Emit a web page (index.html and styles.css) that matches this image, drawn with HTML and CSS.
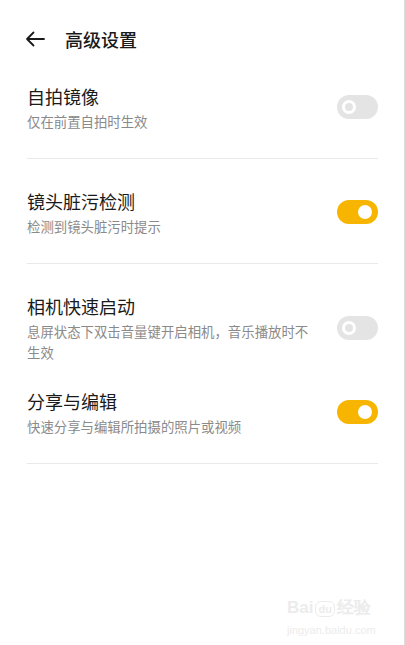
FILE: index.html
```html
<!DOCTYPE html>
<html>
<head>
	<title>高级设置</title>
	<meta charset="utf8"/>
	<link rel="stylesheet" href="styles.css">
</head>
<body>
	<div class="screen">
		<div class="header">
			<svg class="back" width="20" height="16" viewBox="0 0 20 16">
				<path d="M19 8H2M8.5 1.5L2 8l6.5 6.5" fill="none" stroke="#1a1a1a" stroke-width="1.8" stroke-linecap="round" stroke-linejoin="round"/>
			</svg>
			<span class="title">高级设置</span>
		</div>

		<div class="row">
			<div class="text">
				<div class="name">自拍镜像</div>
				<div class="desc">仅在前置自拍时生效</div>
			</div>
			<span class="switch"></span>
		</div>
		<div class="divider"></div>

		<div class="row">
			<div class="text">
				<div class="name">镜头脏污检测</div>
				<div class="desc">检测到镜头脏污时提示</div>
			</div>
			<span class="switch on"></span>
		</div>
		<div class="divider"></div>

		<div class="row">
			<div class="text">
				<div class="name">相机快速启动</div>
				<div class="desc">息屏状态下双击音量键开启相机，音乐播放时不生效</div>
			</div>
			<span class="switch"></span>
		</div>

		<div class="row">
			<div class="text">
				<div class="name">分享与编辑</div>
				<div class="desc">快速分享与编辑所拍摄的照片或视频</div>
			</div>
			<span class="switch on"></span>
		</div>
		<div class="divider"></div>

		<div class="mark">
			<div class="mark-logo">Bai<span class="paw">du</span>经验</div>
			<div class="mark-url">jingyan.baidu.com</div>
		</div>
	</div>
</body>
</html>
```

FILE: styles.css
```css
html, body {
	margin: 0;
	padding: 0;
	background: #fff;
}

body {
	font-family: "Noto Sans CJK SC", "Noto Sans", sans-serif;
	color: #1a1a1a;
}

.screen {
	position: relative;
	box-sizing: border-box;
	width: 405px;
	min-height: 645px;
	border-right: 1px solid #dcdcdc;
	padding: 0 26px 0 27px;
}

.header {
	display: flex;
	align-items: center;
	height: 24px;
	padding: 27px 0 19px;
	margin-left: -2px;
}

.back {
	display: block;
	margin-right: 20px;
}

.title {
	font-size: 18px;
	font-weight: 500;
	line-height: 24px;
}

.row {
	display: flex;
	align-items: center;
	padding: 14px 0 12px;
}

.text {
	flex: 1;
	margin-right: 20px;
}

.name {
	font-size: 18px;
	line-height: 24px;
}

.desc {
	margin-top: 3px;
	font-size: 13.4px;
	line-height: 21px;
	color: #8a8a8a;
}

.divider {
	height: 1px;
	background: #e9e9e9;
	margin: 14px 0 16px;
}

.switch {
	position: relative;
	flex: none;
	width: 41px;
	height: 24px;
	border-radius: 12px;
	background: #e4e4e4;
	margin-top: -2px;
}

.switch::after {
	content: "";
	position: absolute;
	left: 5px;
	top: 5px;
	width: 8px;
	height: 8px;
	border-radius: 50%;
	border: 3px solid #fff;
	background: #e4e4e4;
}

.switch.on {
	background: #f7b500;
}

.switch.on::after {
	left: 21px;
	background: #fff;
}

.mark {
	position: absolute;
	left: 287px;
	top: 598px;
	color: #ececec;
	font-family: "Liberation Sans", sans-serif;
}

.mark-logo {
	font-size: 17px;
	line-height: 20px;
	font-weight: bold;
}

.paw {
	display: inline-block;
	font-size: 11px;
	line-height: 14px;
	padding: 0 2px;
	margin: 0 2px;
	border: 1px solid #ececec;
	border-radius: 6px;
}

.mark-url {
	font-size: 11px;
	line-height: 16px;
	margin-top: 4px;
}
```
